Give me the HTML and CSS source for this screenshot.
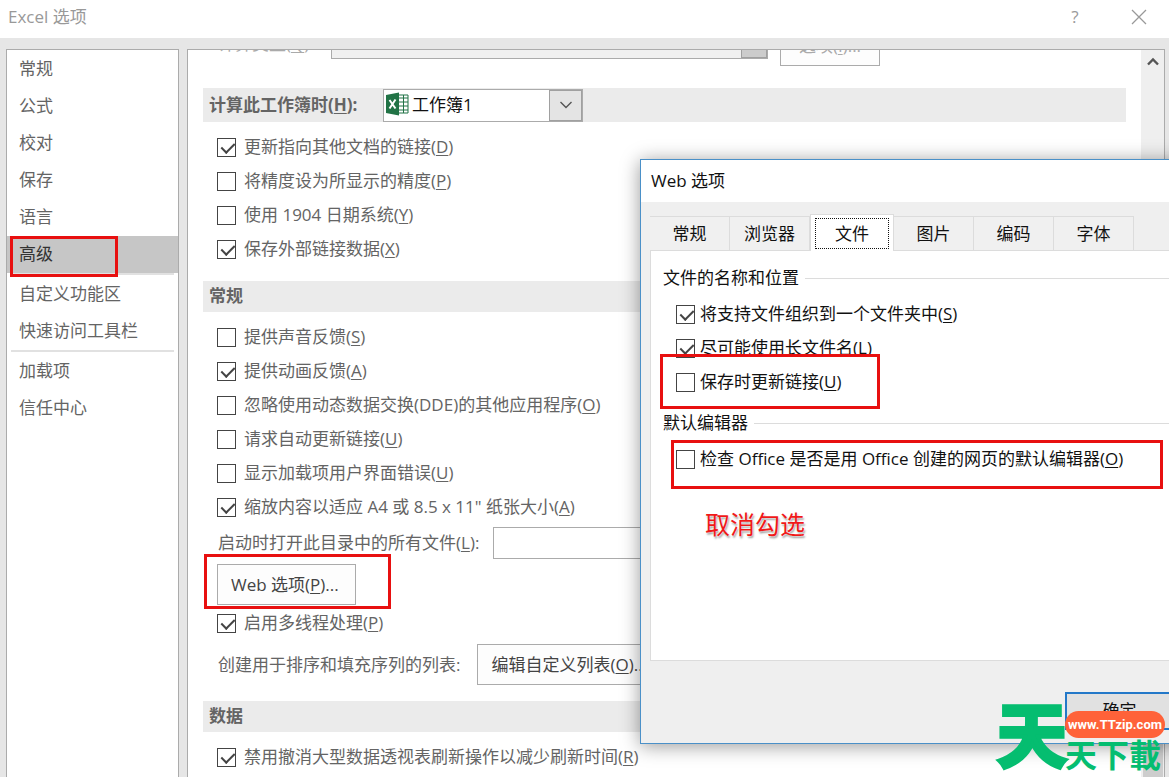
FILE: index.html
```html
<!DOCTYPE html>
<html lang="zh-CN">
<head>
<meta charset="utf-8">
<title>Excel 选项</title>
<link rel="stylesheet" href="styles.css">
</head>
<body>
<div class="window">
  <header class="titlebar">
    <h1>Excel 选项</h1>
    <button class="title-btn" type="button" aria-label="帮助">?</button>
    <button class="title-btn" type="button" aria-label="关闭"><svg width="16" height="16" viewBox="0 0 16 16"><path d="M1 1l14 14M15 1L1 15" fill="none" stroke="#999" stroke-width="1.3"/></svg></button>
  </header>

  <div class="workspace">
    <nav class="sidebar">
      <button type="button">常规</button>
      <button type="button">公式</button>
      <button type="button">校对</button>
      <button type="button">保存</button>
      <button type="button">语言</button>
      <button type="button" class="selected">高级<span class="mark mark-nav"></span></button>
      <hr>
      <button type="button">自定义功能区</button>
      <button type="button">快速访问工具栏</button>
      <hr>
      <button type="button">加载项</button>
      <button type="button">信任中心</button>
    </nav>

    <main class="panel">
      <div class="content">
        <div class="row chart-row">
          <label for="chart">计算类型(<u>Q</u>):</label>
          <div class="combo combo-off"><select id="chart" disabled><option></option></select><span class="drop"></span></div>
          <button class="btn btn-off" type="button" disabled>选项(<u>I</u>)...</button>
        </div>

        <div class="bar bar-combo">
          <label for="book">计算此工作簿时(<u>H</u>):</label>
          <div class="combo">
            <svg class="excel" width="24" height="24" viewBox="0 0 24 24"><path d="M13 3h10v18H13z" fill="#fff" stroke="#217346"/><path d="M14 6h9M14 10h9M14 14h9M14 18h9M18.500 3v18" stroke="#217346" fill="none"/><path d="M1 3l13-2.500v23L1 21z" fill="#217346"/><path d="M4.500 8l6 8.500M10.500 7.500l-6 9" stroke="#fff" stroke-width="2" fill="none"/></svg>
            <select id="book"><option>工作簿1</option></select>
            <span class="drop"><svg width="14" height="8" viewBox="0 0 14 8"><path d="M1.500 1L7 6.500 12.500 1" fill="none" stroke="#555" stroke-width="1.400"/></svg></span>
          </div>
        </div>
        <div class="checks">
          <label><input type="checkbox" checked><span>更新指向其他文档的链接(<u>D</u>)</span></label>
          <label><input type="checkbox"><span>将精度设为所显示的精度(<u>P</u>)</span></label>
          <label><input type="checkbox"><span>使用 1904 日期系统(<u>Y</u>)</span></label>
          <label><input type="checkbox" checked><span>保存外部链接数据(<u>X</u>)</span></label>
        </div>

        <h2 class="bar">常规</h2>
        <div class="checks">
          <label><input type="checkbox"><span>提供声音反馈(<u>S</u>)</span></label>
          <label><input type="checkbox" checked><span>提供动画反馈(<u>A</u>)</span></label>
          <label><input type="checkbox"><span>忽略使用动态数据交换(DDE)的其他应用程序(<u>O</u>)</span></label>
          <label><input type="checkbox"><span>请求自动更新链接(<u>U</u>)</span></label>
          <label><input type="checkbox"><span>显示加载项用户界面错误(<u>U</u>)</span></label>
          <label><input type="checkbox" checked><span>缩放内容以适应 A4 或 8.5 x 11" 纸张大小(<u>A</u>)</span></label>
        </div>
        <div class="row path-row">
          <label for="startup">启动时打开此目录中的所有文件(<u>L</u>):</label>
          <input class="path" id="startup" type="text">
        </div>
        <div class="row web-row">
          <button class="btn" type="button">Web 选项(<u>P</u>)...</button>
          <span class="mark mark-web"></span>
        </div>
        <div class="checks checks-tight">
          <label><input type="checkbox" checked><span>启用多线程处理(<u>P</u>)</span></label>
        </div>
        <div class="row list-row">
          <span>创建用于排序和填充序列的列表:</span>
          <button class="btn" type="button">编辑自定义列表(<u>O</u>)...</button>
        </div>

        <h2 class="bar">数据</h2>
        <div class="checks">
          <label><input type="checkbox" checked><span>禁用撤消大型数据透视表刷新操作以减少刷新时间(<u>R</u>)</span></label>
        </div>
      </div>
      <div class="scrollbar">
        <svg width="12" height="9" viewBox="0 0 12 9"><path d="M1 7.500L6 2.500l5 5" fill="none" stroke="#555" stroke-width="2.400"/></svg>
        <span class="thumb"></span>
      </div>
    </main>
  </div>

  <section class="dialog" role="dialog" aria-labelledby="web-title">
    <h2 id="web-title">Web 选项</h2>
    <div class="dialog-body">
      <div class="tabs" role="tablist">
        <button type="button" role="tab">常规</button>
        <button type="button" role="tab">浏览器</button>
        <button type="button" role="tab" class="active" aria-selected="true"><span>文件</span></button>
        <button type="button" role="tab">图片</button>
        <button type="button" role="tab">编码</button>
        <button type="button" role="tab">字体</button>
      </div>
      <div class="page">
        <h3>文件的名称和位置</h3>
        <div class="checks">
          <label><input type="checkbox" checked><span>将支持文件组织到一个文件夹中(<u>S</u>)</span></label>
          <label><input type="checkbox" checked><span>尽可能使用长文件名(<u>L</u>)</span></label>
          <label><input type="checkbox"><span>保存时更新链接(<u>U</u>)</span><i class="mark mark-update"></i></label>
        </div>
        <h3>默认编辑器</h3>
        <div class="checks">
          <label><input type="checkbox"><span>检查 Office 是否是用 Office 创建的网页的默认编辑器(<u>O</u>)</span><i class="mark mark-editor"></i></label>
        </div>
        <p class="note">取消勾选</p>
      </div>
      <div class="actions"><button type="button">确定</button></div>
    </div>
  </section>

  <div class="watermark">
    <span class="wm-big">天</span>
    <span class="wm-url">www.TTzip.com</span>
    <span class="wm-small">天下載</span>
  </div>
</div>
</body>
</html>
```
FILE: styles.css
```css
* { box-sizing: border-box; }

body {
  margin: 0;
  overflow: hidden;
  color: #646464;
  font: 17px/24px "Open Sans", "Noto Sans CJK SC", sans-serif;
}

button, input, select { font: inherit; color: inherit; margin: 0; }
h1, h2, h3, p { margin: 0; font: inherit; }
u { text-underline-offset: 2px; text-decoration-skip-ink: none; }

.window {
  position: relative;
  display: flex;
  flex-direction: column;
  height: 100vh;
  overflow: hidden;
  background: #e6e6e6;
}

.titlebar {
  display: flex;
  align-items: center;
  flex: none;
  height: 38px;
  padding: 0 14px 4px 8px;
  background: #fff;
  color: #999;
}
.titlebar h1 { flex: 1; }
.title-btn {
  display: grid;
  place-items: center;
  width: 32px;
  height: 32px;
  margin-left: 32px;
  padding: 0;
  border: 0;
  background: none;
}

.workspace {
  display: flex;
  flex: 1;
  gap: 8px;
  min-height: 0;
  padding: 11px 4px 0 6px;
}

.sidebar {
  flex: none;
  width: 173px;
  padding-top: 1px;
  border: 1px solid #ababab;
  border-bottom: 0;
  background: #fff;
}
.sidebar button {
  position: relative;
  display: block;
  width: 100%;
  height: 37px;
  padding: 0 12px 2px;
  border: 0;
  background: none;
  text-align: left;
}
.sidebar .selected { background: #c6c6c6; color: #333; }
.sidebar hr {
  height: 2px;
  margin: 0 4px 1px;
  border: 0;
  background: #e1e1e1;
}

.panel {
  display: flex;
  flex: 1;
  min-width: 0;
  overflow: hidden;
  border: 1px solid #ababab;
  border-bottom: 0;
  background: #fff;
}
.content { flex: 1; min-width: 0; padding: 0 15px; }
.scrollbar {
  display: flex;
  flex-direction: column;
  align-items: center;
  flex: none;
  width: 23px;
  padding-top: 7px;
  background: #efefef;
}
.thumb { width: 20px; height: 120px; margin-top: auto; background: #cdcdcd; }

.row {
  position: relative;
  display: flex;
  align-items: center;
  padding-left: 15px;
  white-space: nowrap;
}

.btn {
  height: 41px;
  padding: 0 13px;
  border: 1px solid #ababab;
  background: #fdfdfd;
  color: #444;
}

.chart-row { height: 40px; margin-top: -24px; color: #aaa; align-items: flex-start; }
.chart-row label { width: 113px; padding-top: 6px; }
.chart-row .combo { width: 437px; }
.btn-off { width: 100px; height: 40px; margin-left: 12px; color: #aaa; }

.combo {
  position: relative;
  width: 200px;
  height: 33px;
  border: 1px solid #ababab;
  background: #fff;
}
.combo select {
  appearance: none;
  width: 100%;
  height: 100%;
  padding: 0 36px 0 28px;
  border: 0;
  background: none;
  color: #111;
  font-weight: 400;
}
.combo-off { background: #f0f0f0; }
.excel { position: absolute; left: 1px; top: 2px; }
.drop {
  position: absolute;
  top: 0;
  right: 0;
  bottom: 0;
  display: grid;
  place-items: center;
  width: 33px;
  border: 1px solid #a0a0a0;
  background: #e4e4e4;
  pointer-events: none;
}
.combo-off .drop { width: 26px; background: #ccc; }

.bar {
  display: flex;
  align-items: center;
  height: 31px;
  margin-top: 15px;
  padding: 0 6px 2px;
  background: #ebebeb;
  font-weight: 700;
}
.bar-combo { height: 34px; margin-top: 22px; padding: 0 6px; }
.bar-combo label { width: 174px; white-space: nowrap; }

.checks { padding: 8px 0 0 14px; }
.checks-tight { padding-top: 1px; }
.checks label {
  position: relative;
  display: flex;
  align-items: center;
  gap: 8px;
  width: max-content;
  height: 34px;
}
.checks input {
  appearance: none;
  position: relative;
  width: 19px;
  height: 19px;
  border: 1px solid #444;
  background: #fff;
}
.checks input:checked::after {
  content: "";
  position: absolute;
  left: 6px;
  top: 1px;
  width: 6px;
  height: 11px;
  border: solid #444;
  border-width: 0 2px 2px 0;
  transform: rotate(45deg);
}

.path-row { margin-top: 3px; }
.path { flex: 1; height: 32px; margin-left: 14px; border: 1px solid #ababab; }
.web-row { margin-top: 5px; padding-left: 14px; }
.web-row .btn { padding: 0 14px 0 13px; min-width: 139px; text-align: left; }
.list-row { margin-top: 4px; }
.list-row .btn { margin-left: 17px; }
.list-row + .bar { margin-top: 16px; }

.dialog {
  position: absolute;
  top: 159px;
  left: 640px;
  right: -20px;
  border: 1px solid #4a90c8;
  background: #efefef;
  color: #111;
  box-shadow: 0 2px 18px rgba(0, 0, 0, .4);
}
.dialog h2 { padding: 9px 10px; background: #fff; }
.dialog-body { padding: 14px 0 13px 9px; }
.tabs { display: flex; align-items: flex-end; }
.tabs button {
  width: 80px;
  height: 34px;
  padding: 0;
  border: solid #dcdcdc;
  border-width: 1px 1px 0 0;
  background: #f0f0f0;
}
.tabs .active {
  width: 84px;
  height: 37px;
  margin: -3px 0 -1px;
  padding: 3px 4px;
  border-left-width: 1px;
  background: #fff;
}
.tabs .active span { display: block; height: 31px; border: 1px dotted #111; line-height: 29px; }
.page {
  min-height: 411px;
  padding: 15px 0 0 12px;
  border: 1px solid #dcdcdc;
  background: #fff;
}
.page h3 { display: flex; align-items: center; gap: 6px; }
.page h3::after { content: ""; flex: 1; height: 1px; background: #dcdcdc; }
.page .checks { padding: 7px 0 12px 13px; }
.page .checks label { gap: 5px; }

.note {
  padding: 18px 0 0 42px;
  color: #f01818;
  font-size: 25px;
  line-height: 36px;
  text-shadow: 0 0 2px #fff, 1px 2px 2px #999;
}

.actions { display: flex; justify-content: flex-end; padding-top: 31px; }
.actions button {
  width: 123px;
  height: 38px;
  padding: 0 20px 0 6px;
  border: 2px solid #2378c8;
  background: #e1e1e1;
}

.mark { position: absolute; z-index: 1; border: 3px solid #e81010; pointer-events: none; }
.mark-nav { left: 3px; top: 0; width: 108px; height: 41px; }
.mark-web { left: 1px; top: -10px; width: 187px; height: 55px; }
.mark-update { left: -16px; top: -11px; width: 220px; height: 55px; }
.mark-editor { left: -5px; top: -2px; width: 492px; height: 49px; }

.watermark {
  position: absolute;
  right: 4px;
  bottom: 0;
  display: grid;
  grid-template-columns: 68px 100px;
  grid-template-rows: 35px 39px;
  color: #05bd70;
  font-family: "Noto Sans CJK TC", sans-serif;
  font-weight: 700;
}
.wm-big {
  grid-row: 1 / 3;
  font-size: 70px;
  line-height: 58px;
  -webkit-text-stroke: 4px #05bd70;
  stroke-linejoin: round;
}
.wm-url {
  align-self: end;
  height: 27px;
  border-radius: 14px;
  background: #ff6239;
  color: #fff;
  font: 700 13px/27px Roboto, sans-serif;
  text-align: center;
}
.wm-small { font-size: 32px; line-height: 30px; }
```
